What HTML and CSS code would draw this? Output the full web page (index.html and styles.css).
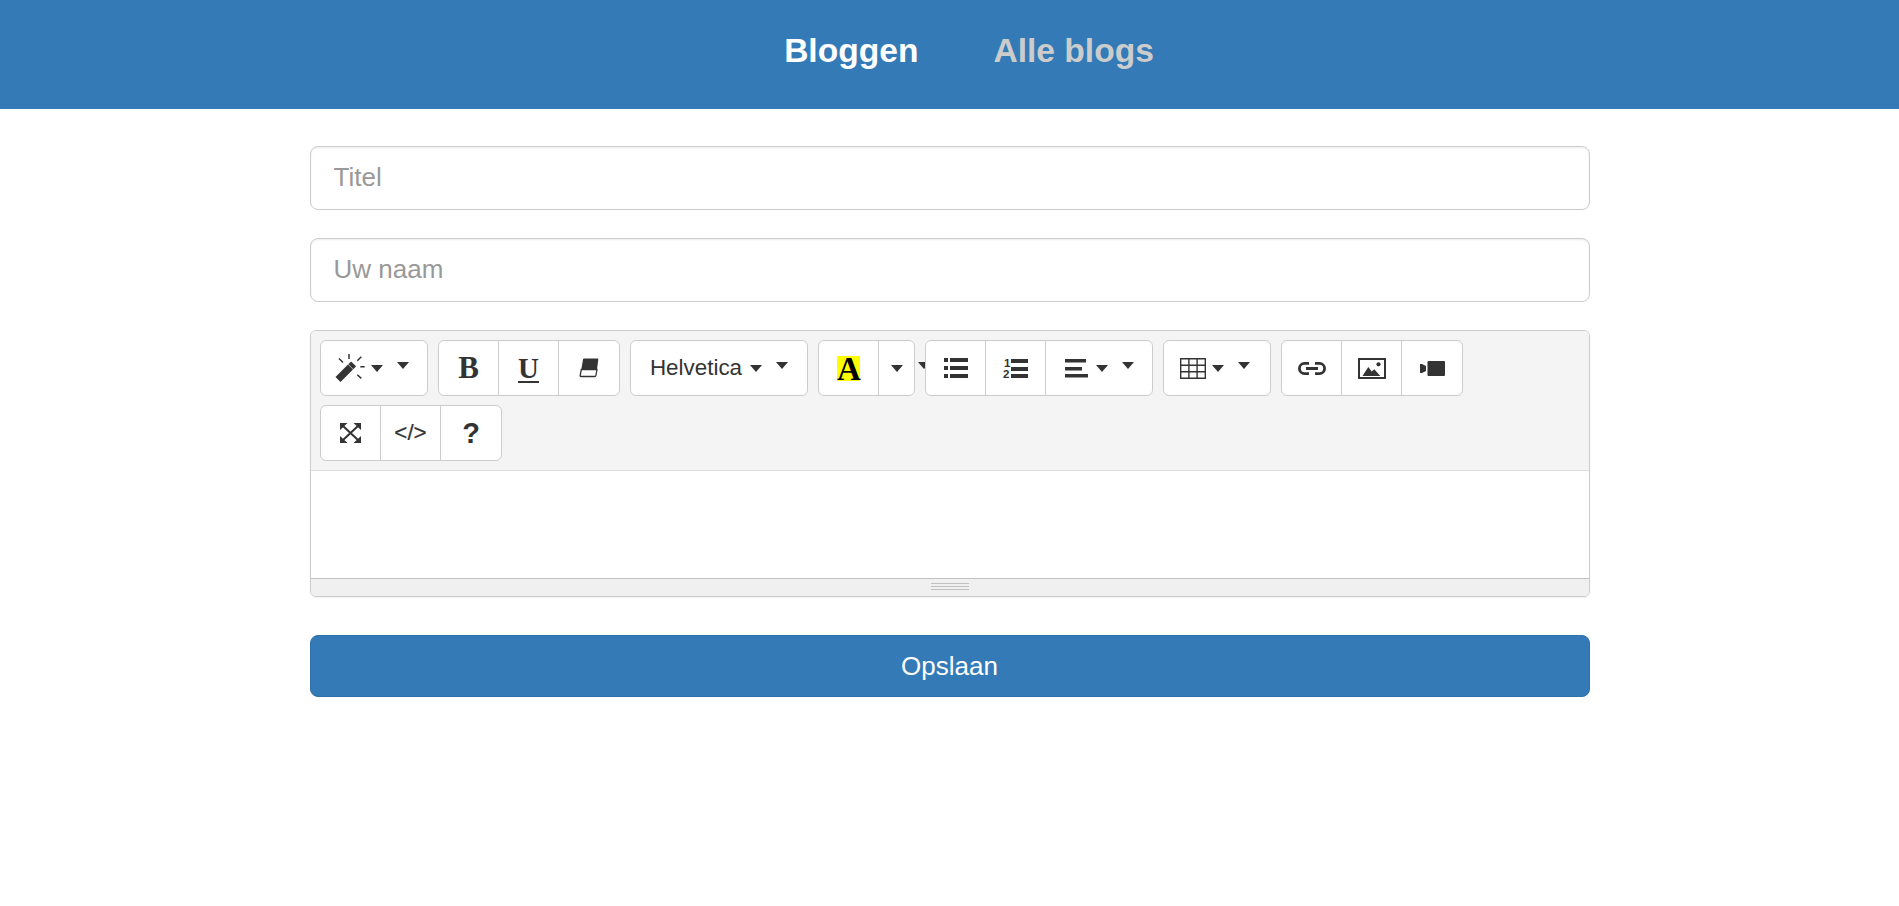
FILE: index.html
```html
<!DOCTYPE html>
<html lang="nl">
<head>
  <meta charset="UTF-8">
  <meta name="viewport" content="width=device-width, initial-scale=1.0">
  <title>Bloggen</title>
  <link rel="stylesheet" href="styles.css">
</head>
<body>
  <header class="topbar">
    <nav class="nav">
      <a class="nav-link active" href="#">Bloggen</a>
      <a class="nav-link" href="#">Alle blogs</a>
    </nav>
  </header>

  <main class="container">
    <form class="blog-form">
      <input class="field" type="text" placeholder="Titel">
      <input class="field" type="text" placeholder="Uw naam">

      <div class="editor">
        <div class="toolbar">
          <div class="toolbar-row">
            <div class="group">
              <div class="btn w-drop w-left">
                <svg class="icon" width="30" height="30" viewBox="0 0 30 30">
                  <path d="M3 26.5 15.5 14" stroke="#333" stroke-width="7" fill="none"/>
                  <path d="M15.8 13.7 18.6 10.9" stroke="#333" stroke-width="7" fill="none"/>
                  <path d="M14 1v5M4 5.5l4 4M26.3 3.7l-4 4M25.3 13.7h4.4M22.3 21.8l4 3.6" stroke="#333" stroke-width="1.5" fill="none"/>
                </svg>
                <span class="caret tight"></span>
                <span class="caret upper"></span>
              </div>
            </div>

            <div class="group">
              <div class="btn"><span class="t-bold">B</span></div>
              <div class="btn"><span class="t-under">U</span></div>
              <div class="btn">
                <svg width="20" height="20" viewBox="0 0 20 20">
                  <path d="M5 .5h13.5q1 0 .8 1L18 11.5H2.3L4 1.5q.2-1 1-1z" fill="#333"/>
                  <path d="M2.3 11.5H18l-1.1 6q-.2 1-1.2 1H2q-1 0-.8-1z" fill="#fff" stroke="#333" stroke-width="1.3"/>
                </svg>
              </div>
            </div>

            <div class="group">
              <div class="btn w-font">
                <span class="font-name">Helvetica</span>
                <span class="caret"></span>
                <span class="caret upper"></span>
              </div>
            </div>

            <div class="group">
              <div class="btn"><span class="t-color">A</span></div>
              <div class="btn w-arrow">
                <span class="caret"></span>
                <span class="caret upper"></span>
              </div>
            </div>

            <div class="group">
              <div class="btn">
                <svg width="24" height="20" viewBox="0 0 24 20" fill="#333">
                  <path d="M0 0h4v4H0zM6 0h18v4H6zM0 8h4v4H0zM6 8h18v4H6zM0 16h4v4H0zM6 16h18v4H6z"/>
                </svg>
              </div>
              <div class="btn">
                <svg width="25" height="21" viewBox="0 0 25 21" fill="#333">
                  <text class="svg-digit" x="1" y="9">1</text>
                  <text class="svg-digit" x="0" y="20">2</text>
                  <path d="M8 1h17v4H8zM8 9h17v4H8zM8 16h17v4H8z"/>
                </svg>
              </div>
              <div class="btn w-drop w-align">
                <svg class="icon" width="23" height="19" viewBox="0 0 23 19" fill="#333">
                  <path d="M0 0h21v3.5H0zM0 8h17v3.5H0zM0 15h23v3.5H0z"/>
                </svg>
                <span class="caret"></span>
                <span class="caret upper"></span>
              </div>
            </div>

            <div class="group">
              <div class="btn w-drop w-left">
                <svg class="icon" width="26" height="21" viewBox="0 0 26 21" fill="none" stroke="#333" stroke-width="1.4">
                  <path d="M.7.7h24.6v19.6H.7zM.7 7.2h24.6M.7 13.8h24.6M8.9.7v19.6M17.1.7v19.6"/>
                </svg>
                <span class="caret tight"></span>
                <span class="caret upper"></span>
              </div>
            </div>

            <div class="group">
              <div class="btn">
                <svg width="28" height="13" viewBox="0 0 28 13" fill="none" stroke="#333" stroke-width="2.8">
                  <path d="M11 1.4H6.5a5.1 5.1 0 0 0 0 10.2H11M17 1.4h4.5a5.1 5.1 0 0 1 0 10.2H17M8 6.5h12"/>
                </svg>
              </div>
              <div class="btn">
                <svg width="28" height="21" viewBox="0 0 28 21">
                  <path d="M1 1h26v19H1z" fill="none" stroke="#333" stroke-width="2"/>
                  <path d="M4.5 18l5.8-9 3.4 4.5 2.6-2.3 6 6.8z" fill="#333"/>
                  <circle cx="20.5" cy="6.3" r="2.1" fill="#333"/>
                </svg>
              </div>
              <div class="btn">
                <svg width="25" height="15" viewBox="0 0 25 15" fill="#333">
                  <path d="M0 3h2l4 2v5l-4 2H0z"/>
                  <rect x="7.5" y="0" width="17.5" height="15" rx="1"/>
                </svg>
              </div>
            </div>
          </div>

          <div class="toolbar-row">
            <div class="group">
              <div class="btn">
                <svg width="21" height="20" viewBox="0 0 21 20">
                  <path d="M3 3l15 14M18 3L3 17" stroke="#333" stroke-width="2" fill="none"/>
                  <path d="M0 0h7.5L0 7zM21 0h-7.5L21 7zM0 20h7.5L0 13zM21 20h-7.5L21 13z" fill="#333"/>
                </svg>
              </div>
              <div class="btn"><span class="t-code">&lt;/&gt;</span></div>
              <div class="btn"><span class="t-help">?</span></div>
            </div>
          </div>
        </div>

        <div class="editable"></div>

        <div class="statusbar">
          <div class="grip"><span></span><span></span><span></span></div>
        </div>
      </div>

      <button class="save" type="button">Opslaan</button>
    </form>
  </main>
</body>
</html>
```

FILE: styles.css
```css
*, *::before, *::after { box-sizing: border-box; margin: 0; padding: 0; }
body { font-family: "Liberation Sans", Arial, sans-serif; background: #fff; color: #333; }

.topbar { background: #337ab7; height: 109px; }
.nav { display: flex; justify-content: center; gap: 75px; padding: 31px 0 0 39px; }
.nav-link { font-size: 33.6px; font-weight: bold; line-height: 40px; color: #ccc; text-decoration: none; }
.nav-link.active { color: #fff; }

.container { width: 1280px; margin: 0 auto; padding-top: 37px; }
.blog-form { display: flex; flex-direction: column; gap: 28px; }

.field { width: 100%; height: 64px; padding: 0 23px 2px; border: 1px solid #ccc; border-radius: 8px; box-shadow: inset 0 1px 2px rgba(0,0,0,.075); font-family: inherit; font-size: 26px; color: #555; outline: none; }
.field::placeholder { color: #999; opacity: 1; }

.editor { height: 267px; border: 1px solid #ccc; border-radius: 6px; box-shadow: 0 1px 2px rgba(0,0,0,.06); display: flex; flex-direction: column; overflow: hidden; }
.toolbar { height: 140px; flex: none; background: #f4f4f4; border-bottom: 1px solid #ddd; padding: 9px 0 0 9.5px; display: flex; flex-direction: column; gap: 9px; }
.toolbar-row { display: flex; gap: 10px; }

.group { display: flex; height: 56px; background: #fff; border: 1px solid #ccc; border-radius: 6px; }
.btn { width: 60px; display: flex; align-items: center; justify-content: center; border-left: 1px solid #ccc; }
.btn:first-child { width: 59px; border-left: none; }
.btn:last-child { width: 61px; }
.group .w-drop { width: 106px; }
.group .w-left { padding-right: 4px; }
.group .w-align { width: 107px; }
.group .w-font { width: 176px; }
.group .w-arrow { width: 36px; justify-content: flex-start; padding-left: 12px; }

.caret { flex: none; width: 0; height: 0; margin-left: 8px; border-left: 6px solid transparent; border-right: 6px solid transparent; border-top: 7px solid #333; }
.caret.tight { margin-left: 6px; }
.caret.upper { margin-left: 14px; margin-bottom: 5px; }
.w-arrow .caret:first-child { margin-left: 0; }
.w-arrow .caret.upper { margin-left: 15px; }

.font-name { font-size: 22.4px; color: #333; }

.t-bold { font-family: "Liberation Serif", serif; font-weight: bold; font-size: 31px; }
.t-under { font-family: "Liberation Serif", serif; font-weight: bold; font-size: 29px; text-decoration: underline; text-decoration-thickness: 2px; text-underline-offset: 3px; }
.t-color { width: 23px; height: 25px; background: #ff0; color: #000; font-family: "Liberation Serif", serif; font-weight: bold; font-size: 33px; line-height: 27px; text-align: center; }
.t-code { font-size: 22.4px; color: #333; -webkit-text-stroke: 0.2px #333; }
.t-help { font-size: 29px; font-weight: bold; color: #333; }
.svg-digit { font-family: "Liberation Sans", sans-serif; font-size: 11.5px; font-weight: bold; }

.editable { flex: 1; background: #fff; }
.statusbar { height: 18px; flex: none; background: #f0f0f0; border-top: 1px solid #c0c0c0; display: flex; justify-content: center; align-items: center; }
.grip { width: 38px; margin-bottom: 3px; display: flex; flex-direction: column; gap: 2px; }
.grip span { height: 1px; background: #c0c0c0; }

.save { height: 62px; margin-top: 10px; background: #337ab7; border: 1px solid #2f72ab; border-radius: 8px; color: #fff; font-family: inherit; font-size: 26px; cursor: pointer; }
```
